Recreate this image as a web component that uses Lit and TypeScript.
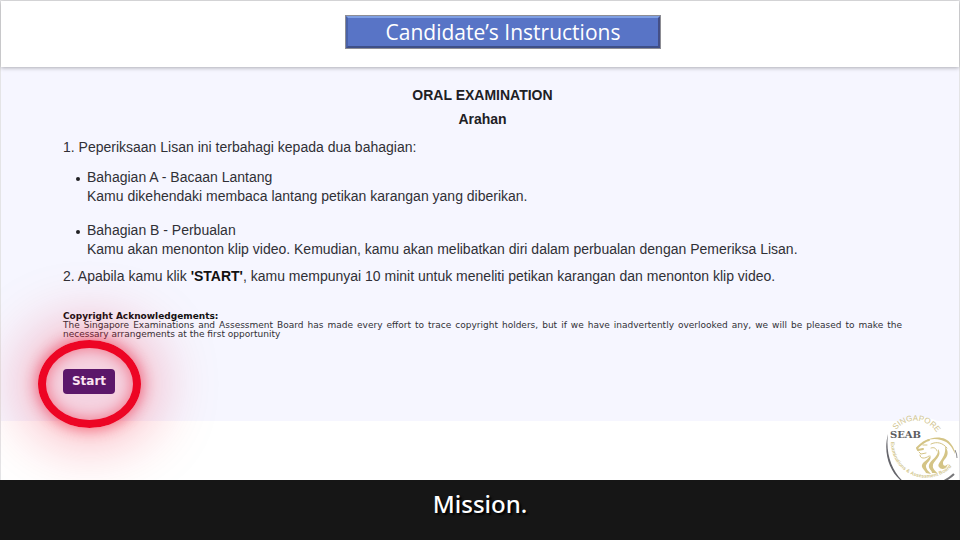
import { LitElement, html, css } from "lit";
import { customElement } from "lit/decorators.js";

@customElement("seab-logo")
class SeabLogo extends LitElement {
  static styles = css`
    :host { display: block; width: 76px; height: 66px; overflow: hidden; }
    .art { display: block; }
    .ring { font: 400 8px "Liberation Sans", Arial, sans-serif; fill: #d0c48e; }
    .small { font-weight: 700; font-size: 5px; fill: #d3c790; }
    .name { font: 700 10px "DejaVu Serif", serif; fill: #5c5c60; }
  `;

  render() {
    return html`
      <svg class="art" width="76" height="66" viewBox="0 0 76 66" role="img" aria-label="SEAB">
        <defs>
          <path id="top" d="M13 16 A25 25 0 0 1 55 21" />
          <path id="bottom" d="M8 28 A35 35 0 0 0 74 45" />
        </defs>
        <circle cx="38" cy="38" r="35" fill="#fff" />
        <path d="M5 20 C-1 42 9 64 26 72 C11 62 2 43 5 20Z" fill="#65656b" />
        <path d="M72 36 Q74 40 74 44" fill="none" stroke="#8a8a8e" stroke-width="1" />
        <path d="M71 60 Q66 65 57 69" fill="none" stroke="#77777a" stroke-width="2" />
        <g fill="#d4c486">
          <path d="M42 27 C50 22 63 22 68 30 C71 34 72 37 72 40 C69 33 66 28 58 26 C52 24 47 25 42 27Z" />
          <path d="M47 41 C50 46 42 49 43 53 C44 57 47 58 48 60 L43 59 C42 56 38 54 39 51 C40 47 46 46 47 41Z" />
          <path d="M55 35 C60 42 51 46 50 51 C49 55 53 57 54 59 L49 59 C49 56 45 55 46 51 C47 46 56 43 55 35Z" />
          <path d="M62 32 C69 42 60 45 60 49 C60 52 62 53 65 50 C63 56 58 56 56 53 C53 49 64 44 62 32Z" />
        </g>
        <g fill="none" stroke="#d4c486" stroke-linecap="round" stroke-linejoin="round">
          <path stroke-width="2" d="M46 26 C41 27 37 31 34 34 L35 36 L40 35" />
          <path stroke-width="1" d="M40 31 L44 31 M36 38 L38 40 L43 39 M37 41 C37 45 42 45 46 42" />
          <path stroke-width="1" d="M48 30 C54 27 60 29 64 34 M48 34 C51 33 53 34 54 37" />
        </g>
        <text class="ring"><textPath href="#top">SINGAPORE</textPath></text>
        <text class="ring small"><textPath href="#bottom">Examinations &amp; Assessment Board</textPath></text>
        <text class="name" x="7" y="24">SEAB</text>
      </svg>
    `;
  }
}

@customElement("app-root")
class AppRoot extends LitElement {
  static styles = css`
    :host {
      display: flex;
      flex-direction: column;
      min-height: 100vh;
      background: #fff;
      color: #303036;
      font: 14px/20px "Liberation Sans", Arial, sans-serif;
    }
    .slide {
      position: relative;
      flex: 1;
      display: flex;
      flex-direction: column;
      box-sizing: border-box;
      border: 1px solid #e4e4e6;
      border-bottom: 0;
    }
    .top {
      display: flex;
      justify-content: center;
      padding: 14px 0 18px;
      margin-left: 46px;
    }
    .bar { box-shadow: 0 1px 4px rgba(0, 0, 0, 0.3); z-index: 1; }
    .title {
      box-sizing: border-box;
      width: 316px;
      margin: 0;
      border: 3px solid;
      border-color: #7f9fe3 #444f86 #3e4f88 #4a62a8;
      outline: 1px solid #8d8d94;
      outline-offset: -1px;
      background: #5874c6;
      color: #fff;
      font: 500 21px/28px "Open Sans", sans-serif;
      text-align: center;
    }
    .panel {
      box-sizing: border-box;
      background: #f6f6ff;
      padding: 16px 57px 27px 62px;
    }
    .head {
      margin: 0;
      font-size: 14px;
      line-height: 24px;
      text-align: center;
      color: #202024;
    }
    .line { margin: 6px 0 0; }
    .parts {
      margin: 11px 0 7px;
      padding-left: 24px;
      list-style: none;
      display: grid;
      gap: 15px;
    }
    .part { display: block; position: relative; line-height: 19px; }
    .part::before {
      content: "";
      position: absolute;
      left: -11px;
      top: 9px;
      width: 4px;
      height: 4px;
      border-radius: 50%;
      background: #202024;
    }
    .parts + .line { margin: 0; }
    .strong { color: #111; }
    .notice {
      margin: 26px 0 30px;
      font: 9px/9px "DejaVu Sans", sans-serif;
      text-align: justify;
    }
    .notice-title { display: block; color: #111; }
    .action { position: relative; width: 52px; height: 25px; }
    .start {
      width: 100%;
      height: 100%;
      padding: 0;
      border: 0;
      border-radius: 4px;
      background: #5c176a;
      color: #fbe4f0;
      font: 700 12px/25px "DejaVu Sans", sans-serif;
      position: relative;
    }
    .halo {
      position: absolute;
      left: -25px;
      top: -29px;
      box-sizing: border-box;
      width: 103px;
      height: 88px;
      border: 8px solid #ed0524;
      border-radius: 50%;
      background: rgba(240, 30, 70, 0.16);
      box-shadow:
        0 0 16px rgba(237, 5, 36, 0.6),
        0 0 64px 12px rgba(237, 5, 36, 0.35),
        inset 0 0 16px rgba(237, 5, 36, 0.5);
      pointer-events: none;
    }
    .logo { position: absolute; right: 0; bottom: 0; }
    .caption {
      position: relative;
      background: #161616;
      color: #fff;
      margin: 0;
      padding: 8px 0 20px;
      text-align: center;
      font: 500 24px/32px "Noto Sans", sans-serif;
      text-shadow: 2px 2px 2px #000;
    }
  `;

  render() {
    return html`
      <main class="slide">
        <header class="bar">
          <div class="top"><h1 class="title">Candidate’s Instructions</h1></div>
        </header>
        <section class="panel">
          <h2 class="head">ORAL EXAMINATION</h2>
          <h3 class="head">Arahan</h3>
          <p class="line">1. Peperiksaan Lisan ini terbahagi kepada dua bahagian:</p>
          <ul class="parts">
            <li class="part">Bahagian A - Bacaan Lantang<br />Kamu dikehendaki membaca lantang petikan karangan yang diberikan.</li>
            <li class="part">Bahagian B - Perbualan<br />Kamu akan menonton klip video. Kemudian, kamu akan melibatkan diri dalam perbualan dengan Pemeriksa Lisan.</li>
          </ul>
          <p class="line">2. Apabila kamu klik <b class="strong">'START'</b>, kamu mempunyai 10 minit untuk meneliti petikan karangan dan menonton klip video.</p>
          <p class="notice">
            <b class="notice-title">Copyright Acknowledgements:</b>
            The Singapore Examinations and Assessment Board has made every effort to trace copyright holders, but if we have inadvertently overlooked any, we will be pleased to make the necessary arrangements at the first opportunity
          </p>
          <div class="action">
            <span class="halo"></span>
            <button class="start" type="button">Start</button>
          </div>
        </section>
        <seab-logo class="logo"></seab-logo>
      </main>
      <p class="caption">Mission.</p>
    `;
  }
}
